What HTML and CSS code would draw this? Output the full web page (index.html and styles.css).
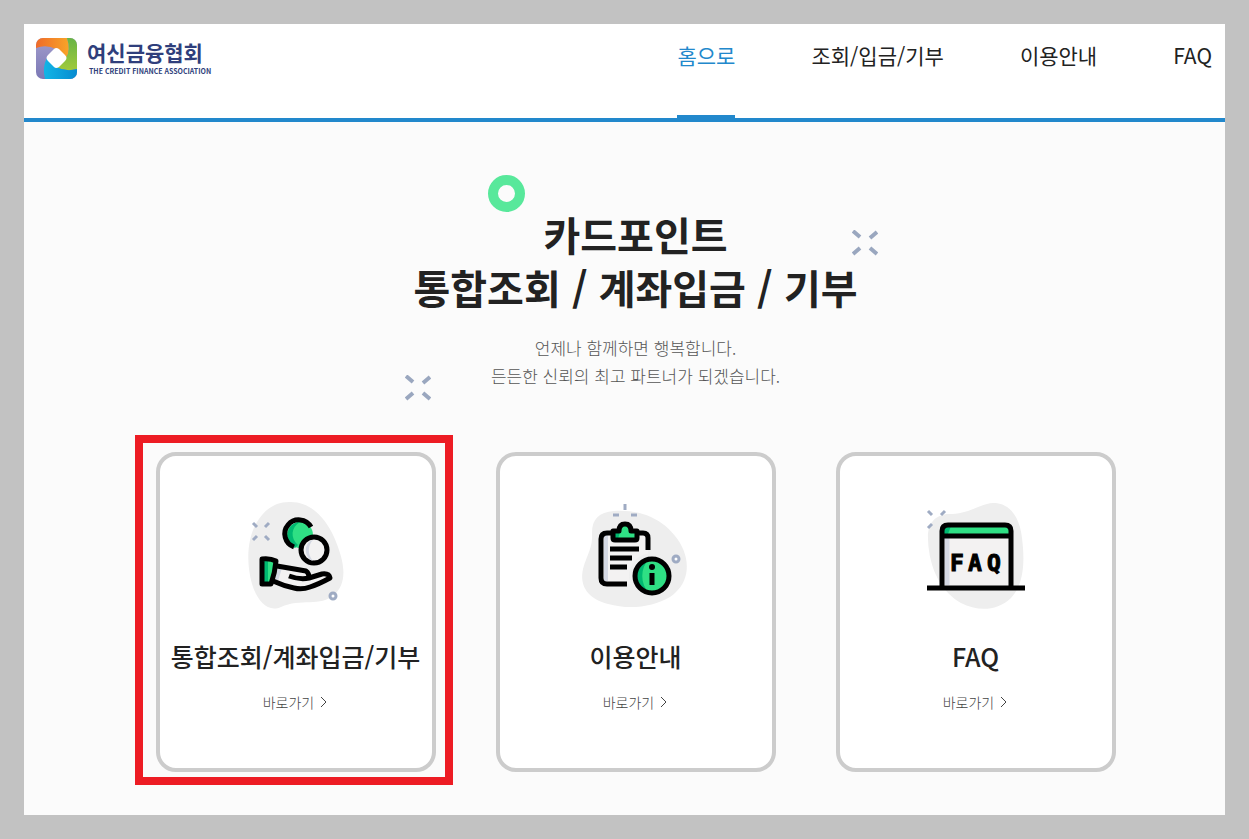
FILE: index.html
```html
<!DOCTYPE html>
<html lang="ko">
<head>
<meta charset="UTF-8">
<meta name="viewport" content="width=device-width, initial-scale=1.0">
<title>카드포인트 통합조회 / 계좌입금 / 기부</title>
<link rel="stylesheet" href="styles.css">
</head>
<body>
<div class="page">
  <header class="header">
    <a href="#" class="logo">
      <svg class="logo-mark" viewBox="0 0 41 41" aria-hidden="true">
        <defs>
          <linearGradient id="orange"><stop offset="0" stop-color="#ef6b2a"/><stop offset="1" stop-color="#f8a428"/></linearGradient>
          <linearGradient id="green" x2="0" y2="1"><stop offset="0" stop-color="#68b445"/><stop offset="1" stop-color="#a0ca3c"/></linearGradient>
          <linearGradient id="blue"><stop offset="0" stop-color="#12b5e6"/><stop offset="1" stop-color="#078bd0"/></linearGradient>
          <linearGradient id="violet" x2="0" y2="1"><stop offset="0" stop-color="#a19ccc"/><stop offset="1" stop-color="#7b78b5"/></linearGradient>
          <clipPath id="mark"><rect width="41" height="41" rx="7"/></clipPath>
        </defs>
        <g clip-path="url(#mark)">
          <rect width="41" height="41" fill="url(#violet)"/>
          <path d="M0 0H31Q35 12 30 20L20 11Q10 6 0 10Z" fill="url(#orange)"/>
          <path d="M31 0H41V31Q30 34 20 29L30 20Q35 12 31 0Z" fill="url(#green)"/>
          <path d="M41 31V41H9Q6 29 11 20L20 29Q30 34 41 31Z" fill="url(#blue)"/>
          <path d="M18 11Q20 9 23 11L29 17Q32 20 29 23L23 29Q20 31 18 29L12 23Q9 20 12 17Z" fill="#fff"/>
        </g>
      </svg>
      <span class="logo-text">
        <strong>여신금융협회</strong>
        <small>THE CREDIT FINANCE ASSOCIATION</small>
      </span>
    </a>
    <nav class="nav">
      <a href="#" class="active">홈으로</a>
      <a href="#">조회/입금/기부</a>
      <a href="#">이용안내</a>
      <a href="#">FAQ</a>
    </nav>
  </header>

  <main class="main">
    <section class="hero">
      <h1>카드포인트<br>통합조회 / 계좌입금 / 기부</h1>
      <p>언제나 함께하면 행복합니다.<br>든든한 신뢰의 최고 파트너가 되겠습니다.</p>
      <span class="ring"></span>
      <svg class="spark spark-right" viewBox="0 0 26 26" aria-hidden="true"><path d="M1 1L8 7M25 2L18 8M1 24L8 18M25 24L18 18"/></svg>
      <svg class="spark spark-left" viewBox="0 0 26 26" aria-hidden="true"><path d="M1 1L8 7M25 2L18 8M1 24L8 18M25 24L18 18"/></svg>
    </section>

    <section class="cards">
      <a href="#" class="card selected">
        <svg class="icon" viewBox="-2 0 125 125" aria-hidden="true">
          <path d="M54 12C76 11 91 29 99 47C110 72 113 93 99 105C86 117 65 108 46 117C32 123 22 110 17 94C11 73 12 48 22 32C29 20 40 12 54 12Z" fill="#eee"/>
          <path class="dash" d="M18 33L22 37M34 33L30 37M18 50L22 46M34 50L30 46"/>
          <circle cx="98" cy="106" r="3" fill="#fff" stroke="#9fabc3" stroke-width="3"/>
          <circle cx="65" cy="45" r="13" fill="#2fdf84"/>
          <path d="M63 32C50 35 49 52 60 58L63 55C55 48 56 37 65 32Z" fill="#00b871"/>
          <path class="line" d="M76 37A14 14 0 1 0 59 57"/>
          <circle cx="79" cy="60" r="13" class="line" fill="#f3f2f2"/>
          <path d="M78 50C69 52 68 67 78 71C72 64 73 55 78 50Z" fill="#d4d8e3"/>
          <path d="M39 76L71 82Q76 84 74 88L91 83L95 87Q81 96 68 99Q58 100 37 92Z" fill="#f3f2f2"/>
          <path d="M43 78L47 78L43 91L39 91Z" fill="#d4d8e3"/>
          <path class="line" d="M42 76L71 81Q74 83 74 88M54 86Q65 90 74 88L87 84Q94 83 95 88Q84 94 75 97Q67 100 59 98Q49 96 38 91"/>
          <path d="M27 69Q35 68 41 71L36 92Q34 94 27 94Z" fill="#2fdf84"/>
          <path d="M28 69H33V93H28Z" fill="#00b871"/>
          <path class="line" d="M27 69Q35 68 41 71Q40 83 36 94H27Z"/>
        </svg>
        <h2>통합조회/계좌입금/기부</h2>
        <span class="more">바로가기 <svg viewBox="0 0 8 12" aria-hidden="true"><path d="M1 1L6 6L1 11"/></svg></span>
      </a>
      <a href="#" class="card">
        <svg class="icon" viewBox="3 0 125 125" aria-hidden="true">
          <path d="M44 21C72 19 96 30 110 53C122 74 118 95 100 107C83 117 60 120 38 114C19 109 9 97 13 79C17 64 23 58 22 43C22 29 29 22 44 21Z" fill="#eee"/>
          <path d="M55 14V20M43 25H49M61 25H67" stroke="#9fabc3" stroke-width="3"/>
          <circle cx="106" cy="69" r="3" fill="#fff" stroke="#9fabc3" stroke-width="3"/>
          <path d="M31 44Q31 42 34 42H73Q78 42 78 48V94H36Q31 94 31 89Z" fill="#f3f2f2"/>
          <path d="M36 44V91" stroke="#d4d8e3" stroke-width="4"/>
          <path class="line" d="M42 43H37Q31 43 31 49V88Q31 94 37 94H57M68 43H73Q78 43 78 48V60"/>
          <path d="M43 41H49Q49 34 55 34Q61 34 61 41H67V48Q67 50 65 50H45Q43 50 43 48Z" fill="#2fdf84"/>
          <path d="M44 42H50L48 49H44Z" fill="#00b871"/>
          <path class="line" d="M43 41H49Q49 34 55 34Q61 34 61 41H67V48Q67 50 65 50H45Q43 50 43 48Z"/>
          <path class="line" d="M40 59H69M40 68H62M40 77H57"/>
          <circle cx="82" cy="86" r="23" fill="#eee"/>
          <circle cx="82" cy="86" r="17" fill="#2fdf84"/>
          <path d="M79 69C61 73 61 99 79 103C70 94 70 78 79 69Z" fill="#00b871"/>
          <circle cx="82" cy="86" r="17" class="line"/>
          <circle cx="82" cy="77" r="3"/>
          <path class="line" d="M82 83V95"/>
        </svg>
        <h2>이용안내</h2>
        <span class="more">바로가기 <svg viewBox="0 0 8 12" aria-hidden="true"><path d="M1 1L6 6L1 11"/></svg></span>
      </a>
      <a href="#" class="card">
        <svg class="icon" viewBox="-2 0 125 125" aria-hidden="true">
          <path d="M78 13C97 13 105 30 107 48C110 72 109 94 96 108C81 122 62 121 46 113C28 103 14 81 13 49C12 31 23 23 37 24C56 23 64 14 78 13Z" fill="#eee"/>
          <path class="dash" d="M13 21L17 25M30 21L26 25M13 38L17 34"/>
          <rect x="27" y="35" width="69" height="62" rx="5" fill="#f3f2f2"/>
          <path d="M32 47V95" stroke="#d4d8e3" stroke-width="5"/>
          <path d="M27 40Q27 35 32 35H91Q96 35 96 40V45H27Z" fill="#2fdf84"/>
          <path d="M29 36H36L33 44H29Z" fill="#00b871"/>
          <path class="line" d="M27 97V41Q27 35 33 35H90Q96 35 96 41V97M27 46H96M12 98H110"/>
          <text class="icon-text" y="81"><tspan x="35">F</tspan><tspan x="53">A</tspan><tspan x="72">Q</tspan></text>
        </svg>
        <h2>FAQ</h2>
        <span class="more">바로가기 <svg viewBox="0 0 8 12" aria-hidden="true"><path d="M1 1L6 6L1 11"/></svg></span>
      </a>
    </section>
  </main>
</div>
</body>
</html>
```
FILE: styles.css
```css
* {
  box-sizing: border-box;
}
body {
  margin: 0;
  padding: 24px;
  min-height: 100vh;
  display: flex;
  background: #c2c2c2;
  color: #222;
  font-family: "Noto Sans CJK KR", sans-serif;
}
a {
  color: inherit;
  text-decoration: none;
}
.page {
  flex: 1;
  background: #fbfbfb;
}

/* header */
.header {
  display: flex;
  justify-content: space-between;
  align-items: flex-start;
  height: 98px;
  padding: 0 13px 0 12px;
  background: #fff;
  border-bottom: 4px solid #2288cc;
}
.logo {
  display: flex;
  gap: 10px;
  margin-top: 14px;
  color: #2f3f7c;
}
.logo-mark {
  width: 41px;
  height: 41px;
}
.logo-text {
  display: flex;
  flex-direction: column;
}
.logo-text strong {
  font-size: 21px;
  line-height: 28px;
}
.logo-text small {
  padding-left: 2px;
  font-size: 7px;
  font-weight: bold;
  line-height: 10px;
}
.nav {
  display: flex;
  gap: 76px;
  height: 94px;
}
.nav a {
  padding-top: 16px;
  font-size: 21px;
  line-height: 30px;
}
.nav .active {
  color: #2288cc;
  border-bottom: 3px solid #2288cc;
}

/* hero */
.main {
  padding: 86px 0 43px 22px;
}
.hero {
  position: relative;
  width: 480px;
  margin: 0 auto;
  text-align: center;
}
.hero h1 {
  margin: 0;
  font-size: 40px;
  line-height: 53px;
  font-weight: bold;
  white-space: nowrap;
}
.hero p {
  margin: 20px 0 0;
  color: #555;
  font-family: "Noto Sans CJK KR Light", "Noto Sans CJK KR", sans-serif;
  font-weight: 300;
  font-size: 17px;
  line-height: 28px;
}
.ring {
  position: absolute;
  top: -33px;
  left: 92px;
  width: 37px;
  height: 37px;
  border: 10px solid #58e89b;
  border-radius: 50%;
}
.spark {
  position: absolute;
  width: 26px;
  height: 26px;
  fill: none;
  stroke: #9aa7bf;
  stroke-width: 4;
}
.spark-right {
  top: 22px;
  right: -2px;
}
.spark-left {
  top: 167px;
  left: 9px;
}

/* cards */
.cards {
  display: flex;
  justify-content: center;
  gap: 60px;
  margin-top: 62px;
}
.card {
  position: relative;
  display: flex;
  flex-direction: column;
  align-items: center;
  width: 280px;
  height: 320px;
  padding-top: 34px;
  background: #fff;
  border: 4px solid #ccc;
  border-radius: 20px;
}
.selected::after {
  content: "";
  position: absolute;
  inset: -21px -21px -17px -25px;
  border: 8px solid #ed1c24;
}
.icon {
  width: 125px;
  height: 125px;
}
.card h2 {
  margin: 23px 0 0;
  font-size: 25px;
  line-height: 36px;
  font-weight: 500;
  white-space: nowrap;
}
.more {
  display: flex;
  align-items: center;
  gap: 6px;
  margin-top: 18px;
  color: #444;
  font-family: "Noto Sans CJK KR Light", "Noto Sans CJK KR", sans-serif;
  font-weight: 300;
  font-size: 14px;
  line-height: 20px;
}
.more svg {
  width: 8px;
  height: 12px;
  fill: none;
  stroke: #444;
}
.line {
  stroke: #000;
  stroke-width: 5;
  stroke-linejoin: round;
}
path.line,
.line:not([fill]) {
  fill: none;
}
.dash {
  stroke: #9fabc3;
  stroke-width: 3;
}
.icon-text {
  font: 900 23px "DejaVu Sans Mono", monospace;
  stroke: #000;
}
```
